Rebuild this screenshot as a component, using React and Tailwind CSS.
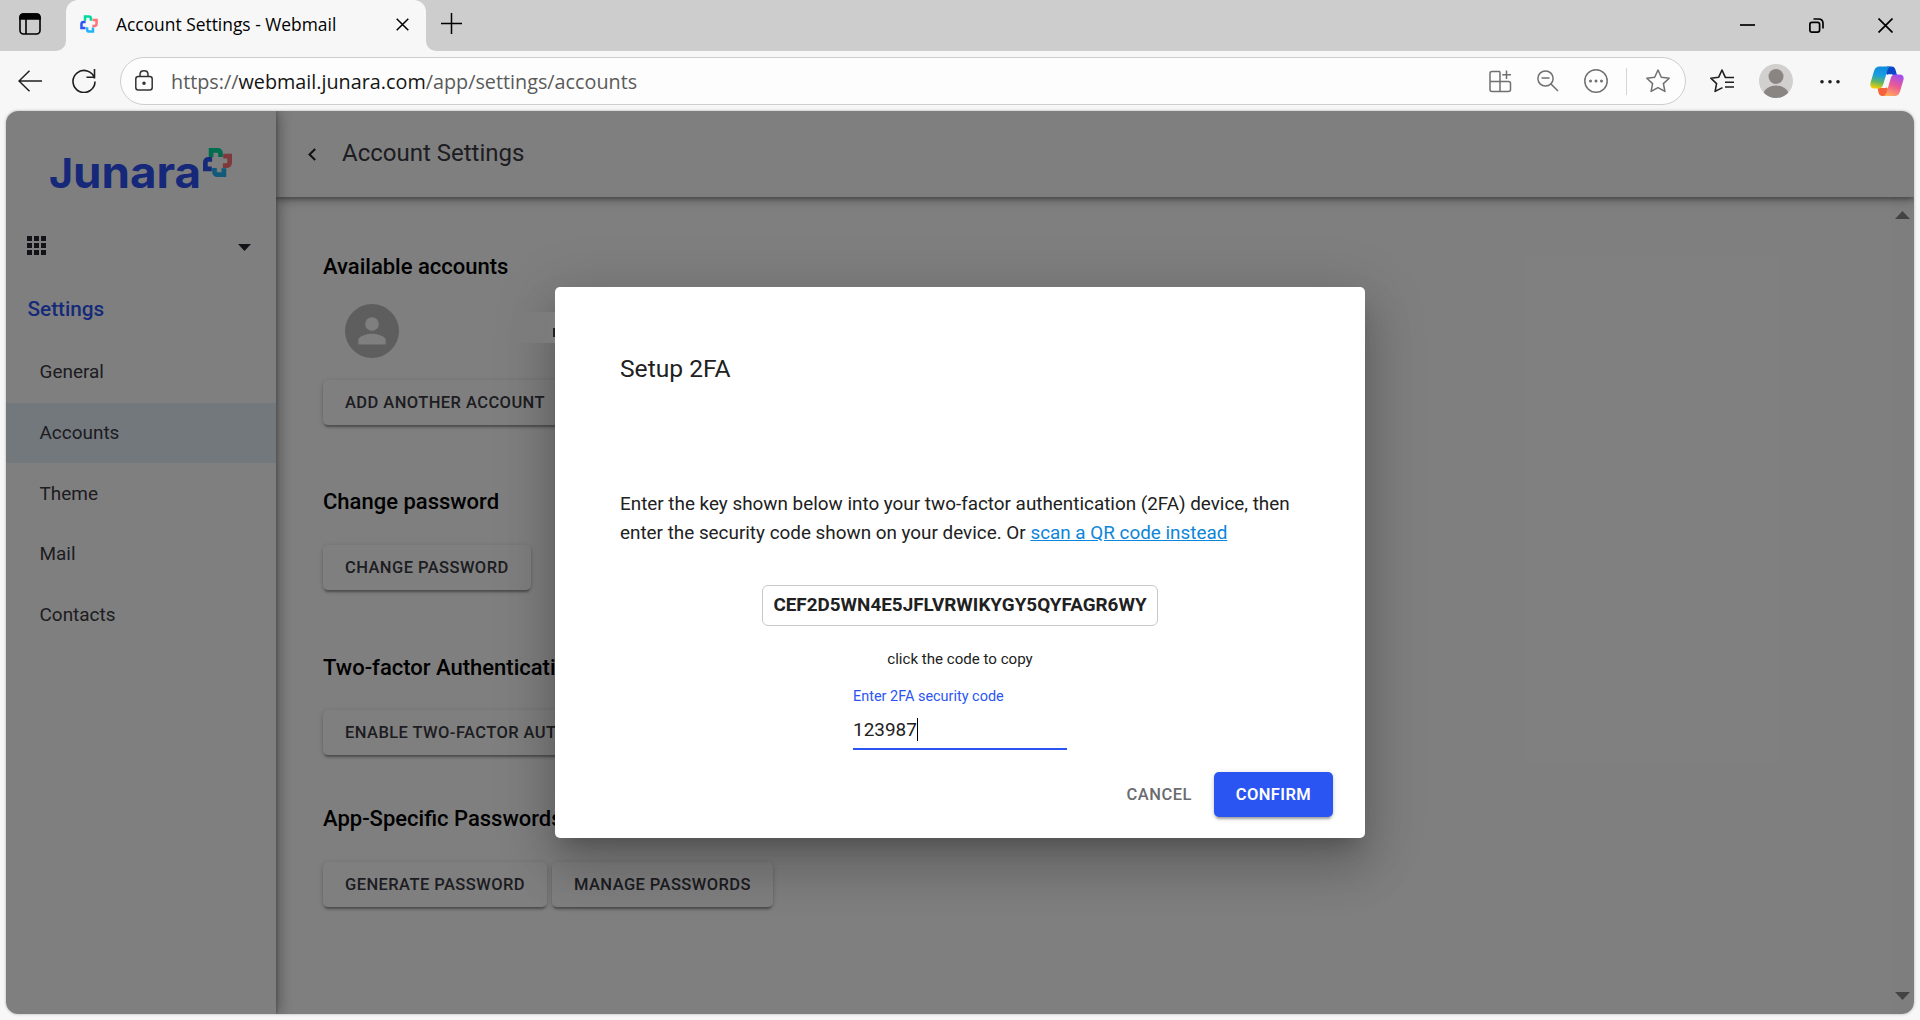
const menuItems = ["General", "Accounts", "Theme", "Mail", "Contacts"];

function Pinwheel({ size, strokeWidth = 12 }) {
  return (
    <svg width={size} height={size} viewBox="0 0 86 86" fill="none" strokeWidth={strokeWidth}>
      <path d="M24 27V7H42Q52 7 52 17V27" stroke="#00d9a0" />
      <path d="M60 24H79V42Q79 52 69 52H59" stroke="#ff7276" />
      <path d="M62 60V79H44Q34 79 34 69V59" stroke="#22b4f8" />
      <path d="M26 62H7V44Q7 34 17 34H27" stroke="#2c54f5" />
    </svg>
  );
}

function Copilot() {
  return (
    <svg width="34" height="31" viewBox="0 0 34 31">
      <defs>
        <linearGradient id="cpLeft" x1="0.5" y1="0" x2="0.3" y2="1">
          <stop offset="0" stopColor="#0d8bdc" />
          <stop offset="0.4" stopColor="#1b9de0" />
          <stop offset="0.7" stopColor="#5fb564" />
          <stop offset="1" stopColor="#f5d000" />
        </linearGradient>
        <linearGradient id="cpRight" x1="0.7" y1="0" x2="0.3" y2="1">
          <stop offset="0" stopColor="#a34df0" />
          <stop offset="0.5" stopColor="#ec5a92" />
          <stop offset="1" stopColor="#ffab5a" />
        </linearGradient>
      </defs>
      <path d="M17 .5H21.500C24 .5 25 2 25.700 4.500L27 9H17L15 5Z" fill="#0b46c8" />
      <path d="M17 30H12.500C10 30 9 28.500 8.500 26.500L7.500 21.500H17L19 25Z" fill="#f4633a" />
      <path d="M9.500.5H21.500C19 .5 18 2.500 17.200 5L13.500 17.500C12.500 21 11.500 22.500 8 22.500H4.500C1 22.500-.3 20 .6 16.500L4 5C5 2 6.500.5 9.500.5Z" fill="url(#cpLeft)" />
      <path d="M24.500 30H12.500C15 30 16 28 16.800 25.500L20.500 13C21.500 9.500 22.500 8.500 26 8.500H29.500C33 8.500 34.300 11 33.400 14L30 25.500C29 28.500 27.500 30 24.500 30Z" fill="url(#cpRight)" />
      <path d="M18.500 8.300H23.500C21.300 8.700 20.500 11 19.800 13L17.500 20C17 21.300 16 22 14.500 22H10.500C12.700 21.700 13.500 19.500 14.200 17.500L16.300 10.500C16.800 9 17.400 8.300 18.500 8.300Z" fill="#f7f7f7" />
    </svg>
  );
}

function TabStrip() {
  return (
    <div className="flex h-[51px] bg-[#cdcdcd] text-black">
      <div className="flex w-[66px] items-center pb-[3px] pl-[19px]">
        <svg width="22" height="22" viewBox="0 0 22 22" fill="none" stroke="currentColor" strokeWidth="1.6">
          <rect x="1" y="1" width="20" height="20" rx="3.500" />
          <path d="M1 6V4.500Q1 1 4.500 1H17.500Q21 1 21 4.500V6Z" fill="currentColor" />
          <path d="M7 6V21" />
        </svg>
      </div>
      <div className="relative flex w-[360px] items-center rounded-t-[12px] bg-[#f7f7f7] pb-[3px] pl-[14px]">
        <svg className="absolute bottom-0 -left-[10px]" width="10" height="10">
          <path d="M10 0V10H0A10 10 0 0 0 10 0Z" fill="#f7f7f7" />
        </svg>
        <svg className="absolute -right-[10px] bottom-0" width="10" height="10">
          <path d="M0 0V10H10A10 10 0 0 1 0 0Z" fill="#f7f7f7" />
        </svg>
        <Pinwheel size={18} />
        <span className="ml-[18px] w-[280px] font-['Open_Sans',sans-serif] text-[17.4px] leading-6 whitespace-nowrap">
          Account Settings - Webmail
        </span>
        <svg width="13" height="13" viewBox="0 0 13 13" stroke="currentColor" strokeWidth="1.500">
          <path d="M.7.7L12.300 12.300M12.300.7L.7 12.300" />
        </svg>
      </div>
      <div className="flex items-center pb-[4px] pl-[15px]">
        <svg width="21" height="21" stroke="currentColor" strokeWidth="1.500">
          <path d="M10.500 0V21M0 10.500H21" />
        </svg>
      </div>
      <div className="ml-auto flex items-center gap-[54px] pr-[27px]">
        <svg width="15" height="15" fill="none" stroke="currentColor" strokeWidth="1.700">
          <path d="M0 7H15" />
        </svg>
        <svg width="15" height="15" fill="none" stroke="currentColor" strokeWidth="1.700">
          <rect x=".9" y="4.400" width="9.700" height="9.700" rx="2" />
          <path d="M4.500 1H9.500Q14 1 14 5.500V10.500" />
        </svg>
        <svg width="15" height="15" fill="none" stroke="currentColor" strokeWidth="1.700">
          <path d="M.5.5L14.500 14.500M14.500.5L.5 14.500" />
        </svg>
      </div>
    </div>
  );
}

function Toolbar() {
  return (
    <div className="flex h-[60px] items-center bg-[#f7f7f7] text-[#1f1f1f]">
      <svg className="mb-px ml-[18px]" width="24" height="22" fill="none" stroke="currentColor" strokeWidth="1.500">
        <path d="M11.500 .8L1 11L11.500 21.200M1 11H24" />
      </svg>
      <svg className="ml-[30px]" width="24" height="24" fill="none" stroke="currentColor" strokeWidth="1.600">
        <path d="M22.600 9.500A11 11 0 1 0 23 12.500M22.500 0V8.200H14.500" />
      </svg>
      <div className="ml-[24px] flex h-[48px] w-[1566px] items-center rounded-full border-[1.500px] border-[#cecece] bg-[#fdfdfd] pl-[14px] text-[#707070]">
        <svg className="mb-[2px] text-[#333]" width="18" height="21" fill="none" stroke="currentColor" strokeWidth="1.500">
          <rect x=".8" y="6.500" width="16.400" height="13.500" rx="2.500" />
          <path d="M5 6.500V4.500Q5 .8 9 .8T13 4.500V6.500" />
          <circle cx="9" cy="13.200" r="1" fill="currentColor" />
        </svg>
        <span className="mt-px ml-[18px] flex-1 font-['Open_Sans',sans-serif] text-[19.8px] text-[#5a5a5a]">
          https://<span className="text-[#141414]">webmail.junara.com</span>/app/settings/accounts
        </span>
        <svg width="23" height="23" fill="none" stroke="currentColor" strokeWidth="1.500">
          <path d="M11 1.500H3Q1 1.500 1 3.500V19.500Q1 21.500 3 21.500H19.500Q21.500 21.500 21.500 19.500V13.500Q21.500 11.500 19.500 11.500H1M11 1.500V21.500M17.500 .5V9M13.200 4.800H22" />
        </svg>
        <svg className="ml-[25px]" width="22" height="22" fill="none" stroke="currentColor" strokeWidth="1.500">
          <circle cx="8.500" cy="8.500" r="7.600" />
          <path d="M14 14L21 21M4.500 8H12.500" />
        </svg>
        <svg className="ml-[25px]" width="24" height="24" fill="none" stroke="currentColor" strokeWidth="1.500">
          <circle cx="12" cy="12" r="11.200" />
          <g fill="currentColor" stroke="none">
            <circle cx="6.500" cy="12" r="1.500" />
            <circle cx="12" cy="12" r="1.500" />
            <circle cx="17.500" cy="12" r="1.500" />
          </g>
        </svg>
        <div className="ml-[18px] h-[27px] w-px bg-[#d5d5d5]" />
        <svg className="mr-[15px] ml-[19px]" width="24" height="24" fill="none" stroke="currentColor" strokeWidth="1.500" strokeLinejoin="round">
          <path d="M12 1L15.300 8.200L23.200 9.200L17.400 14.600L18.900 22.400L12 18.600L5.100 22.400L6.600 14.600L.8 9.200L8.700 8.200Z" />
        </svg>
      </div>
      <svg className="ml-[24px]" width="24" height="24" fill="none" stroke="currentColor" strokeWidth="1.600" strokeLinejoin="round">
        <path d="M16 8.300H15.300L12 1L8.700 8.200L.8 9.200L6.600 14.600L5.100 22.400L12.500 18.600M15 8.500H24M15 13.300H24M15 18H24" />
      </svg>
      <svg className="ml-[25px]" width="34" height="34">
        <clipPath id="face"><circle cx="17" cy="17" r="17" /></clipPath>
        <g clipPath="url(#face)">
          <rect width="34" height="34" fill="#d2d0ce" />
          <circle cx="17" cy="12.500" r="7.500" fill="#8a8583" />
          <ellipse cx="17" cy="32" rx="13" ry="10.500" fill="#8a8583" />
        </g>
      </svg>
      <svg className="ml-[27px]" width="20" height="5" fill="currentColor">
        <circle cx="2" cy="2.800" r="1.800" />
        <circle cx="10" cy="2.800" r="1.800" />
        <circle cx="18" cy="2.800" r="1.800" />
      </svg>
      <div className="ml-[30px]">
        <Copilot />
      </div>
    </div>
  );
}

function Sidebar() {
  return (
    <div className="relative z-10 w-[270px] bg-white shadow-[3px_0_14px_rgba(0,0,0,0.35),1px_0_3px_rgba(0,0,0,0.2)]">
      <div className="h-[125px] pt-[24px] pl-[34px]">
        <svg width="210" height="76" fill="#2c50f2" className="overflow-visible font-['Inter',sans-serif] font-bold">
          <text x="9" y="52.500" fontSize="40.500" textLength="24" lengthAdjust="spacingAndGlyphs">J</text>
          <text x="33" y="52.500" fontSize="44.500" textLength="128" lengthAdjust="spacingAndGlyphs">unara</text>
          <g transform="translate(163 13)"><Pinwheel size={29} strokeWidth={14} /></g>
        </svg>
      </div>
      <div className="flex h-[20px] items-center justify-between pr-[25px] pl-[21px]">
        <div className="mb-px grid grid-cols-3 gap-[2px]">
          {Array.from({ length: 9 }, (_, i) => (
            <div key={i} className="h-[5px] w-[5px] bg-[#26262e]" />
          ))}
        </div>
        <svg width="13" height="7" className="mt-[2px]"><path d="M0 0H13L6.500 7Z" fill="#26262e" /></svg>
      </div>
      <div className="mt-[38px] h-[30px] pl-[21.500px] text-[20.75px] leading-[30px] font-medium text-[#2c54f5]">
        Settings
      </div>
      <div className="mt-[18px] flex flex-col gap-[0.75px]">
        {menuItems.map((item) => (
          <div
            key={item}
            className={`h-[60px] pl-[33.5px] text-[18.95px] leading-[59px] text-[#3a3a44] ${item === "Accounts" ? "bg-[#e6f1fa]" : ""}`}
          >
            {item}
          </div>
        ))}
      </div>
    </div>
  );
}

function GreyButton({ children }) {
  return (
    <button className="h-[45px] rounded-[5px] bg-white px-[22px] pt-[2px] text-[16.5px] font-medium tracking-[0.43px] whitespace-nowrap text-[#3a3a44] uppercase shadow-[0_4px_2px_-2px_rgba(0,0,0,0.22),0_2px_3px_rgba(0,0,0,0.16),0_1px_6px_rgba(0,0,0,0.14)]">
      {children}
    </button>
  );
}

function Heading({ children }) {
  return <h2 className="h-[30px] text-[22px] leading-[30px] font-medium whitespace-nowrap text-black">{children}</h2>;
}

function Content() {
  return (
    <div className="flex flex-1 flex-col">
      <div className="relative z-[1] flex h-[86px] items-center bg-white pl-[32px] text-[#3a3a44] shadow-[0_3px_10px_rgba(0,0,0,0.3),0_2px_4px_rgba(0,0,0,0.25)]">
        <svg width="8" height="13" fill="none" stroke="#26262e" strokeWidth="2.200">
          <path d="M7.200 1L1.500 6.500L7.200 12" />
        </svg>
        <h1 className="mb-[2px] ml-[26px] text-[24px]">Account Settings</h1>
      </div>
      <div className="flex flex-1">
        <div className="flex-1 pt-[55px] pl-[47px]">
          <Heading>Available accounts</Heading>
          <div className="mt-[22px] ml-[22px] flex h-[54px] w-[54px] items-center justify-center rounded-full bg-[#bdbdbd]">
            <svg width="28" height="28" viewBox="0 0 28 28" fill="#fff">
              <circle cx="14" cy="7" r="6.800" />
              <path d="M.3 27.500V23.500C.3 19 9 16.800 14 16.800S27.700 19 27.700 23.500V27.500Z" />
            </svg>
          </div>
          <div className="mt-[22px]"><GreyButton>Add another account</GreyButton></div>
          <div className="mt-[62px]"><Heading>Change password</Heading></div>
          <div className="mt-[28px]"><GreyButton>Change password</GreyButton></div>
          <div className="mt-[63px]"><Heading>Two-factor Authentication</Heading></div>
          <div className="mt-[27px]"><GreyButton>Enable two-factor authentication</GreyButton></div>
          <div className="mt-[49px]"><Heading>App-Specific Passwords</Heading></div>
          <div className="mt-[28px] flex gap-[5px]">
            <GreyButton>Generate password</GreyButton>
            <GreyButton>Manage passwords</GreyButton>
          </div>
        </div>
        <div className="flex w-[23px] flex-col items-center justify-between bg-[#fcfcfc] pt-[14px] pb-[14px]">
          <svg width="15" height="8"><path d="M0 8L7.500 0L15 8Z" fill="#878787" /></svg>
          <svg width="15" height="8"><path d="M0 0L7.500 8L15 0Z" fill="#878787" /></svg>
        </div>
      </div>
    </div>
  );
}

function SetupDialog() {
  return (
    <div className="relative h-[551px] w-[810px] rounded-[5px] bg-white pt-[66px] text-[#212121] shadow-[0_14px_19px_-9px_rgba(0,0,0,0.2),0_30px_48px_4px_rgba(0,0,0,0.14),0_11px_58px_10px_rgba(0,0,0,0.12)]">
      <h3 className="pl-[65px] text-[24.6px] leading-8">Setup 2FA</h3>
      <p className="mt-[104px] pl-[65px] text-[18.87px] leading-[29px]">
        Enter the key shown below into your two-factor authentication (2FA) device, then
        <br />
        enter the security code shown on your device. Or{" "}
        <a className="text-[#0c86d8] underline">scan a QR code instead</a>
      </p>
      <div className="mx-auto mt-[38px] h-[41px] w-[396px] rounded-[6px] border border-[#c8c8c8] text-center text-[18.87px] leading-[37px] font-bold">
        CEF2D5WN4E5JFLVRWIKYGY5QYFAGR6WY
      </div>
      <div className="mt-[23px] text-center text-[15.1px] leading-5">click the code to copy</div>
      <div className="mx-auto mt-[19px] w-[214px] border-b-2 border-[#2b55f3] pb-[6px]">
        <div className="text-[14.45px] leading-[18px] text-[#2b55f3]">Enter 2FA security code</div>
        <div className="mt-[12px] flex h-[24px] text-[18.95px] leading-6">
          123987
          <span className="h-[23px] w-px bg-black" />
        </div>
      </div>
      <div className="mt-[22px] flex h-[45px] items-center justify-end pr-[32px] text-[16.5px] font-medium tracking-[0.5px]">
        <button className="mr-[22px] pt-[2px] text-[#6b6b6f]">CANCEL</button>
        <button className="h-[45px] w-[119px] rounded-[5px] bg-[#2b55f3] pt-[2px] font-semibold tracking-[0.4px] text-white shadow-[0_4px_2px_-2px_rgba(0,0,0,0.2),0_2px_3px_rgba(0,0,0,0.14),0_1px_6px_rgba(0,0,0,0.12)]">
          CONFIRM
        </button>
      </div>
    </div>
  );
}

export default function App() {
  return (
    <div className="flex h-[1020px] w-[1920px] flex-col overflow-hidden bg-[#f7f7f7] font-['Roboto',sans-serif]">
      <TabStrip />
      <Toolbar />
      <div className="mx-[6px] h-[903px] rounded-[12px] shadow-[0_0_3px_rgba(0,0,0,0.3)]">
        <div className="relative flex h-full overflow-hidden rounded-[12px] bg-white">
          <Sidebar />
          <Content />
          <div className="absolute inset-0 z-20 flex items-center justify-center bg-black/50">
            <SetupDialog />
            {/* account name strip, cut off by the dialog */}
            <div className="absolute top-[201px] left-[474px] flex h-[31px] w-[75px] items-center justify-end bg-linear-to-r from-transparent to-[#7d7d7d]">
              <div className="mt-[10px] h-[9px] w-[2px] bg-[#1f1f1f]" />
            </div>
          </div>
        </div>
      </div>
    </div>
  );
}
